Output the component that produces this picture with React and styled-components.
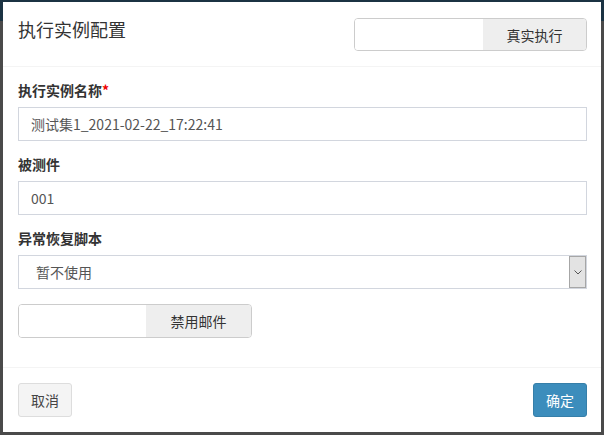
import React from "react";
import styled, { createGlobalStyle } from "styled-components";

const GlobalStyle = createGlobalStyle`
  html, body {
    margin: 0;
    padding: 0;
  }
  body {
    background: #4a4a4a;
    font-family: "Noto Sans CJK SC", "Liberation Sans", sans-serif;
    font-size: 14px;
    color: #333;
  }
  * {
    box-sizing: border-box;
  }
`;

const Backdrop = styled.div`
  width: 604px;
  height: 435px;
  padding: 2px 3px 3px 3px;
  background: linear-gradient(#1b3343 0, #1b3343 21px, #4a4a4a 21px);
`;

const Modal = styled.div`
  background: #fff;
  height: 430px;
  display: flex;
  flex-direction: column;
`;

const Header = styled.div`
  display: flex;
  justify-content: space-between;
  align-items: flex-start;
  padding: 16px 14px 15px 15px;
  border-bottom: 1px solid #f4f4f4;
`;

const Title = styled.h4`
  margin: -2px 0 0 0;
  font-size: 18px;
  line-height: 26px;
  font-weight: normal;
  color: #333;
`;

const Toggle = styled.div`
  display: flex;
  width: ${({ $width }) => $width}px;
  height: ${({ $height }) => $height}px;
  border: 1px solid #ccc;
  border-radius: 4px;
  overflow: hidden;
`;

const ToggleOff = styled.div`
  flex: 1;
  background: #fff;
`;

const ToggleLabel = styled.div`
  width: ${({ $width }) => $width}px;
  background: #eee;
  color: #333;
  display: flex;
  align-items: center;
  justify-content: center;
  font-size: 14px;
`;

const Body = styled.div`
  padding: 15px 14px 0 15px;
  flex: 1;
`;

const FormGroup = styled.div`
  margin-bottom: 15px;
`;

const Label = styled.label`
  display: block;
  font-weight: bold;
  font-size: 14px;
  line-height: 20px;
  margin: -2px 0 7px 0;
  color: #333;
`;

const Required = styled.span`
  color: #e00;
`;

const Input = styled.input`
  display: block;
  width: 100%;
  height: 34px;
  padding: 6px 12px;
  border: 1px solid #d2d6de;
  border-radius: 0;
  font-family: inherit;
  font-size: 14px;
  color: #555;
  outline: none;
  background: #fff;
`;

const Select = styled.div`
  display: flex;
  align-items: stretch;
  height: 34px;
  border: 1px solid #d2d6de;
  background: #fff;
`;

const SelectValue = styled.div`
  flex: 1;
  display: flex;
  align-items: center;
  padding-left: 17px;
  font-size: 14px;
  color: #555;
`;

const SelectArrow = styled.div`
  width: 17px;
  background: #e3e3e3;
  border: 1px solid #a6a6a6;
  display: flex;
  align-items: center;
  justify-content: center;
`;

const Footer = styled.div`
  display: flex;
  justify-content: space-between;
  padding: 15px 14px 15px 15px;
  border-top: 1px solid #f4f4f4;
`;

const Button = styled.button`
  height: 34px;
  padding: 0 12px;
  font-family: inherit;
  font-size: 14px;
  border-radius: 3px;
  border: 1px solid ${({ $primary }) => ($primary ? "#367fa9" : "#ddd")};
  background: ${({ $primary }) => ($primary ? "#3c8dbc" : "#f4f4f4")};
  color: ${({ $primary }) => ($primary ? "#fff" : "#444")};
  cursor: pointer;
`;

export default function App() {
  return (
    <>
      <GlobalStyle />
      <Backdrop>
        <Modal>
          <Header>
            <Title>执行实例配置</Title>
            <Toggle $width={233} $height={33}>
              <ToggleOff />
              <ToggleLabel $width={103}>真实执行</ToggleLabel>
            </Toggle>
          </Header>
          <Body>
            <FormGroup>
              <Label>
                执行实例名称<Required>*</Required>
              </Label>
              <Input defaultValue="测试集1_2021-02-22_17:22:41" />
            </FormGroup>
            <FormGroup>
              <Label>被测件</Label>
              <Input defaultValue="001" />
            </FormGroup>
            <FormGroup>
              <Label>异常恢复脚本</Label>
              <Select>
                <SelectValue>暂不使用</SelectValue>
                <SelectArrow>
                  <svg width="8" height="5" viewBox="0 0 8 5">
                    <polyline
                      points="0.5,0.5 4,4 7.5,0.5"
                      fill="none"
                      stroke="#555"
                      strokeWidth="1"
                    />
                  </svg>
                </SelectArrow>
              </Select>
            </FormGroup>
            <FormGroup>
              <Toggle $width={234} $height={34}>
                <ToggleOff />
                <ToggleLabel $width={105}>禁用邮件</ToggleLabel>
              </Toggle>
            </FormGroup>
          </Body>
          <Footer>
            <Button>取消</Button>
            <Button $primary>确定</Button>
          </Footer>
        </Modal>
      </Backdrop>
    </>
  );
}
